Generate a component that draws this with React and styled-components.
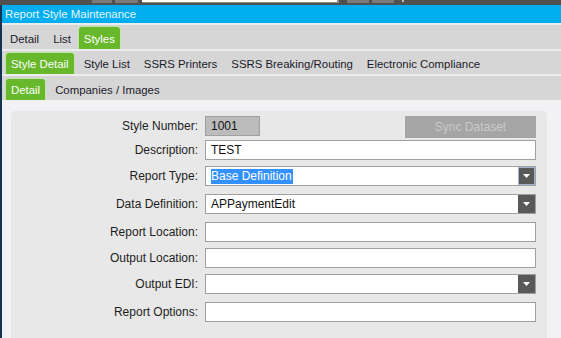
import React from 'react';
import styled, { createGlobalStyle } from 'styled-components';

const GlobalStyle = createGlobalStyle`
  html, body {
    margin: 0;
    padding: 0;
    background: #f2f2f4;
  }
  body {
    font-family: "Liberation Sans", Arimo, Arial, sans-serif;
    font-size: 12px;
    color: #1e1e1e;
  }
`;

const Page = styled.div`
  width: 561px;
  height: 338px;
  display: flex;
  flex-direction: column;
  overflow: hidden;
  font-family: "Liberation Sans", Arimo, Arial, sans-serif;
  font-size: 12px;
`;

// remains of the host toolbar above the window
const TopStrip = styled.div`
  height: 5px;
  flex: none;
  background: #505050;
  display: flex;
  align-items: flex-start;
  padding-left: 92px;
  gap: 3px;
`;
const StripButton = styled.div`
  width: ${p => p.w}px;
  height: 3px;
  background: #7a7a7a;
  margin-left: ${p => p.ml || 0}px;
`;
const StripInput = styled.div`
  width: 195px;
  height: 2px;
  background: #ffffff;
  border-bottom: 1px solid #8c8c8c;
  border-right: 2px solid #8c8c8c;
  margin-left: 1px;
`;
const StripMark = styled.div`
  width: 2px;
  height: 2px;
  background: #bdbdbd;
  margin-left: 5px;
`;

const Window = styled.div`
  flex: 1;
  display: flex;
  flex-direction: column;
  border-left: 2px solid #133552;
  min-height: 0;
`;

const TitleBar = styled.div`
  height: 18px;
  flex: none;
  background: #00adef;
  color: #eaf7ff;
  line-height: 18px;
  padding-left: 3px;
  font-size: 11.4px;
`;

const TabBar = styled.div`
  height: ${p => p.h}px;
  flex: none;
  background: #d6d6d6;
  border-top: 2px solid #ececec;
  display: flex;
  align-items: flex-end;
  padding-left: ${p => p.pl}px;
`;

const Tab = styled.div`
  height: ${p => p.h}px;
  box-sizing: border-box;
  padding: 3px 7px 0;
  display: flex;
  align-items: center;
  font-size: 11.4px;
  color: #1a1a2a;
  white-space: nowrap;
`;

const ActiveTab = styled(Tab)`
  padding: 1px 5px 0;
  margin-right: 2px;
  background: #68b82c;
  color: #ffffff;
  border: 1px solid #c4e3ad;
  border-bottom: none;
  border-radius: 4px 4px 0 0;
`;

const Content = styled.div`
  flex: 1;
  display: flex;
  background: #f2f2f4;
  padding: 11px 14px 0 9px;
  min-height: 0;
`;

const Panel = styled.div`
  flex: 1;
  background: #e8e8e8;
  border-radius: 4px 4px 0 0;
  padding: 5px 11px 0 0;
  display: flex;
  flex-direction: column;
`;

const Row = styled.div`
  display: grid;
  grid-template-columns: 187px 1fr;
  column-gap: 7px;
  height: 20px;
  align-items: center;
  margin-top: ${p => p.gap}px;
`;

const Label = styled.div`
  text-align: right;
  white-space: nowrap;
  color: #1e1e1e;
`;

const FieldLine = styled.div`
  display: flex;
  align-items: flex-start;
  height: 20px;
`;

const Field = styled.div`
  height: 20px;
  box-sizing: border-box;
  width: ${p => (p.w ? `${p.w}px` : 'auto')};
  flex: ${p => (p.w ? 'none' : 1)};
  background: ${p => (p.disabled ? '#bcbcbc' : '#ffffff')};
  border: 1px solid #a0a0a0;
  display: flex;
  align-items: center;
  padding-left: 5px;
  color: #111111;
  position: relative;
`;

const Selected = styled.span`
  background: #3391ff;
  color: #ffffff;
  padding: 0 1px 1px 0;
`;

const DropButton = styled.div`
  position: absolute;
  top: 0;
  right: 0;
  bottom: 0;
  width: 17px;
  box-sizing: border-box;
  background: #595959;
  border: 1px solid ${p => (p.focused ? '#9db3d1' : '#595959')};
  display: flex;
  align-items: center;
  justify-content: center;
`;

const SyncButton = styled.div`
  margin-left: auto;
  width: 131px;
  height: 22px;
  flex: none;
  background: #a5a5a5;
  color: #cacaca;
  display: flex;
  align-items: center;
  justify-content: center;
`;

const Caret = () => (
  <svg width="7" height="4" viewBox="0 0 7 4">
    <path d="M0 0 H7 L3.5 4 Z" fill="#ffffff" />
  </svg>
);

const rows = [
  { label: 'Description:', kind: 'text', value: 'TEST', gap: 4 },
  { label: 'Report Type:', kind: 'select', value: 'Base Definition', selected: true, gap: 6 },
  { label: 'Data Definition:', kind: 'select', value: 'APPaymentEdit', gap: 8 },
  { label: 'Report Location:', kind: 'text', value: '', gap: 8 },
  { label: 'Output Location:', kind: 'text', value: '', gap: 6 },
  { label: 'Output EDI:', kind: 'select', value: '', gap: 6 },
  { label: 'Report Options:', kind: 'text', value: '', gap: 8 },
];

const App = () => {
  const renderRow = (row) => (
    <Row key={row.label} gap={row.gap}>
      <Label>{row.label}</Label>
      <FieldLine>
        <Field>
          {row.selected ? <Selected>{row.value}</Selected> : row.value}
          {row.kind === 'select' && (
            <DropButton focused={row.selected}>
              <Caret />
            </DropButton>
          )}
        </Field>
      </FieldLine>
    </Row>
  );

  return (
    <Page>
      <GlobalStyle />
      <TopStrip>
        <StripButton w={20} />
        <StripButton w={23} />
        <StripInput />
        <StripButton w={22} ml={5} />
        <StripButton w={22} />
        <StripMark />
      </TopStrip>
      <Window>
        <TitleBar>Report Style Maintenance</TitleBar>
        <TabBar h={24} pl={1}>
          <Tab h={24}>Detail</Tab>
          <Tab h={24}>List</Tab>
          <ActiveTab h={23}>Styles</ActiveTab>
        </TabBar>
        <TabBar h={23} pl={3}>
          <ActiveTab h={22}>Style Detail</ActiveTab>
          <Tab h={23}>Style List</Tab>
          <Tab h={23}>SSRS Printers</Tab>
          <Tab h={23}>SSRS Breaking/Routing</Tab>
          <Tab h={23}>Electronic Compliance</Tab>
        </TabBar>
        <TabBar h={24} pl={3}>
          <ActiveTab h={22}>Detail</ActiveTab>
          <Tab h={24}>Companies / Images</Tab>
        </TabBar>
        <Content>
          <Panel>
            <Row gap={0}>
              <Label>Style Number:</Label>
              <FieldLine>
                <Field w={55} disabled>1001</Field>
                <SyncButton>Sync Dataset</SyncButton>
              </FieldLine>
            </Row>
            {rows.map(renderRow)}
          </Panel>
        </Content>
      </Window>
    </Page>
  );
};

export default App;
